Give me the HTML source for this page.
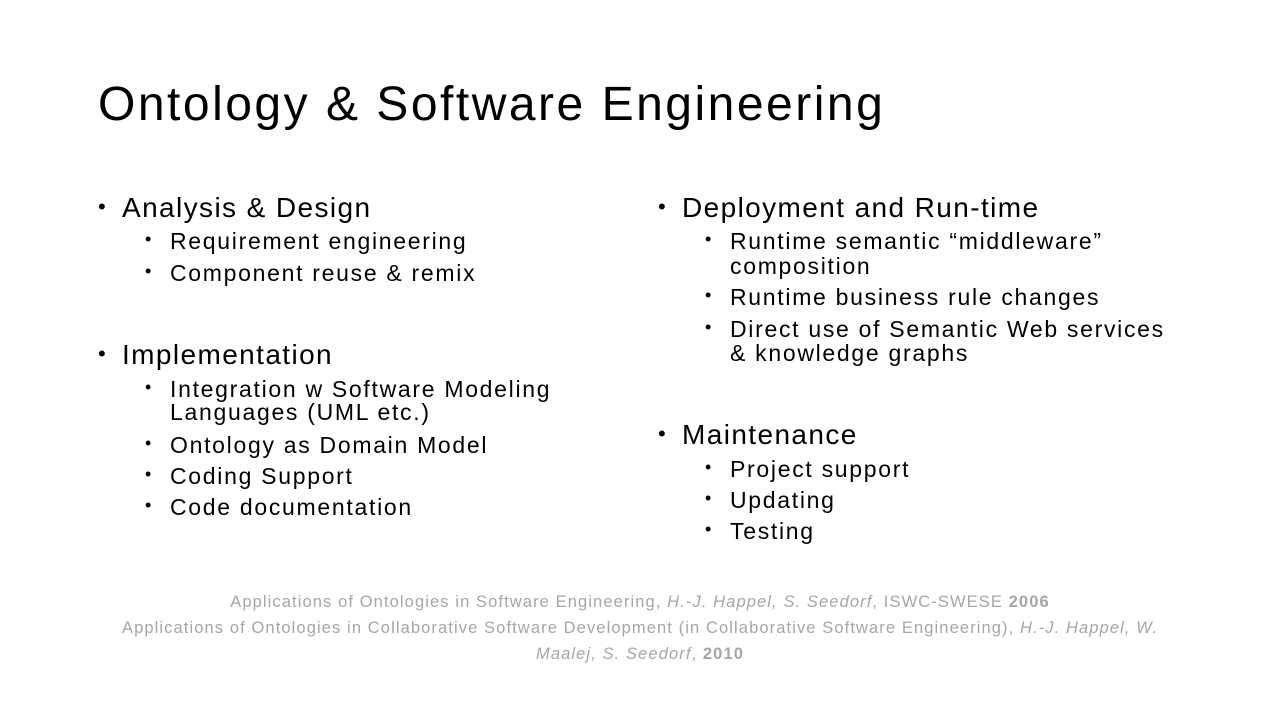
<!DOCTYPE html>
<html><head><meta charset="utf-8"><style>
body{margin:0;width:1280px;height:720px;background:#fff;position:relative;overflow:hidden;font-family:"Liberation Sans",sans-serif;color:#000}
.t{position:absolute;white-space:nowrap;line-height:1}
.h{left:98px;top:81px;font-size:48px;letter-spacing:2.5px}
.l1{font-size:28px;letter-spacing:1.4px}
.l2{font-size:23px;letter-spacing:1.7px}
.b{position:absolute;font-size:22px;line-height:1}
.f{position:absolute;left:0;width:1280px;text-align:center;color:#a6a6a6;font-size:16.5px;letter-spacing:1.1px;line-height:1}
</style></head><body>
<div class="t h">Ontology &amp; Software Engineering</div>

<div class="b" style="left:98px;top:196px">•</div><div class="t l1" style="left:122px;top:194px">Analysis &amp; Design</div>
<div class="b" style="left:145px;top:230px;font-size:18px">•</div><div class="t l2" style="left:170px;top:230px">Requirement engineering</div>
<div class="b" style="left:145px;top:262px;font-size:18px">•</div><div class="t l2" style="left:170px;top:262px">Component reuse &amp; remix</div>
<div class="b" style="left:98px;top:343px">•</div><div class="t l1" style="left:122px;top:341px">Implementation</div>
<div class="b" style="left:145px;top:378px;font-size:18px">•</div><div class="t l2" style="left:170px;top:378px">Integration w Software Modeling</div>
<div class="t l2" style="left:170px;top:401px">Languages (UML etc.)</div>
<div class="b" style="left:145px;top:434px;font-size:18px">•</div><div class="t l2" style="left:170px;top:434px">Ontology as Domain Model</div>
<div class="b" style="left:145px;top:465px;font-size:18px">•</div><div class="t l2" style="left:170px;top:465px">Coding Support</div>
<div class="b" style="left:145px;top:496px;font-size:18px">•</div><div class="t l2" style="left:170px;top:496px">Code documentation</div>

<div class="b" style="left:658px;top:196px">•</div><div class="t l1" style="left:682px;top:194px">Deployment and Run-time</div>
<div class="b" style="left:705px;top:230px;font-size:18px">•</div><div class="t l2" style="left:730px;top:230px">Runtime semantic “middleware”</div>
<div class="t l2" style="left:730px;top:255px">composition</div>
<div class="b" style="left:705px;top:286px;font-size:18px">•</div><div class="t l2" style="left:730px;top:286px">Runtime business rule changes</div>
<div class="b" style="left:705px;top:318px;font-size:18px">•</div><div class="t l2" style="left:730px;top:318px">Direct use of Semantic Web services</div>
<div class="t l2" style="left:730px;top:342px">&amp; knowledge graphs</div>
<div class="b" style="left:658px;top:423px">•</div><div class="t l1" style="left:682px;top:421px">Maintenance</div>
<div class="b" style="left:705px;top:458px;font-size:18px">•</div><div class="t l2" style="left:730px;top:458px">Project support</div>
<div class="b" style="left:705px;top:489px;font-size:18px">•</div><div class="t l2" style="left:730px;top:489px">Updating</div>
<div class="b" style="left:705px;top:520px;font-size:18px">•</div><div class="t l2" style="left:730px;top:520px">Testing</div>

<div class="f" style="top:594px">Applications of Ontologies in Software Engineering, <i>H.-J. Happel, S. Seedorf</i>, ISWC-SWESE <b>2006</b></div>
<div class="f" style="top:620px">Applications of Ontologies in Collaborative Software Development (in Collaborative Software Engineering), <i>H.-J. Happel, W.</i></div>
<div class="f" style="top:646px"><i>Maalej, S. Seedorf</i>, <b>2010</b></div>
</body></html>
